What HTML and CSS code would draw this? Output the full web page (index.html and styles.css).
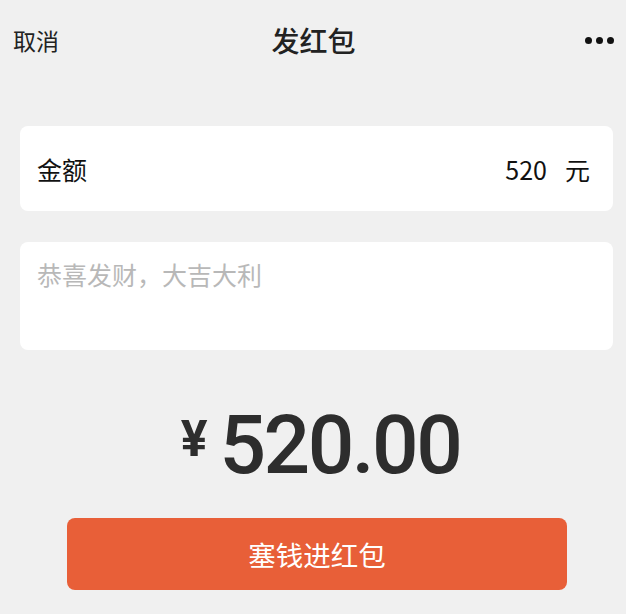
FILE: index.html
```html
<!DOCTYPE html>
<html lang="zh">
<head>
<meta charset="utf-8">
<link rel="stylesheet" href="styles.css">
</head>
<body>
<div class="page">
  <header class="nav">
    <span class="nav-left">取消</span>
    <span class="nav-title">发红包</span>
    <span class="nav-more"><i></i><i></i><i></i></span>
  </header>
  <section class="card card-amount">
    <span class="label">金额</span>
    <span class="value"><span class="num">520</span><span class="unit">元</span></span>
  </section>
  <section class="card card-msg">
    <span class="placeholder">恭喜发财，大吉大利</span>
  </section>
  <div class="total">
    <span class="yen">¥</span>
    <span class="sum">520.00</span>
  </div>
  <div class="btn-wrap">
    <button class="btn">塞钱进红包</button>
  </div>
</div>
</body>
</html>
```
FILE: styles.css
```css
html, body {
  margin: 0;
  padding: 0;
  background: #f0f0f0;
}
.page {
  width: 626px;
  height: 614px;
  overflow: hidden;
  font-family: "Noto Sans CJK SC", "Noto Sans", sans-serif;
  color: #111;
}
.nav {
  height: 80px;
  display: grid;
  grid-template-columns: 1fr auto 1fr;
  align-items: center;
  padding: 0 12px 0 13px;
}
.nav-left {
  font-size: 23px;
  color: #222;
  justify-self: start;
}
.nav-title {
  font-size: 28px;
  font-weight: 500;
  color: #222;
}
.nav-more {
  justify-self: end;
  display: flex;
  gap: 4px;
}
.nav-more i {
  width: 7px;
  height: 7px;
  border-radius: 50%;
  background: #111;
}
.card {
  margin: 0 13px 0 20px;
  background: #fff;
  border-radius: 8px;
}
.card-amount {
  margin-top: 46px;
  height: 85px;
  display: flex;
  align-items: center;
  justify-content: space-between;
  padding: 0 23px 0 17px;
  font-size: 25px;
}
.value {
  display: flex;
  gap: 18px;
  align-items: center;
}
.card-msg {
  margin-top: 31px;
  height: 108px;
  padding: 14px 17px;
  box-sizing: border-box;
}
.placeholder {
  font-size: 25px;
  color: #b8b8b8;
}
.total {
  margin-top: 50px;
  height: 86px;
  display: flex;
  justify-content: center;
  align-items: center;
  gap: 12px;
  color: #2d2d2d;
  font-family: "Roboto", sans-serif;
  font-weight: 500;
  padding-left: 15px;
}
.yen {
  font-size: 50px;
  font-weight: 700;
  margin-bottom: 8px;
}
.sum {
  font-size: 82px;
  letter-spacing: -2.5px;
  line-height: 86px;
  margin-top: 4px;
}
.btn-wrap {
  margin-top: 32px;
  display: flex;
  padding-left: 67px;
}
.btn {
  width: 500px;
  height: 72px;
  border: none;
  border-radius: 8px;
  background: #e85f38;
  color: #fff;
  font-family: "Noto Sans CJK SC", sans-serif;
  font-size: 27.5px;
  padding: 0;
}
```
